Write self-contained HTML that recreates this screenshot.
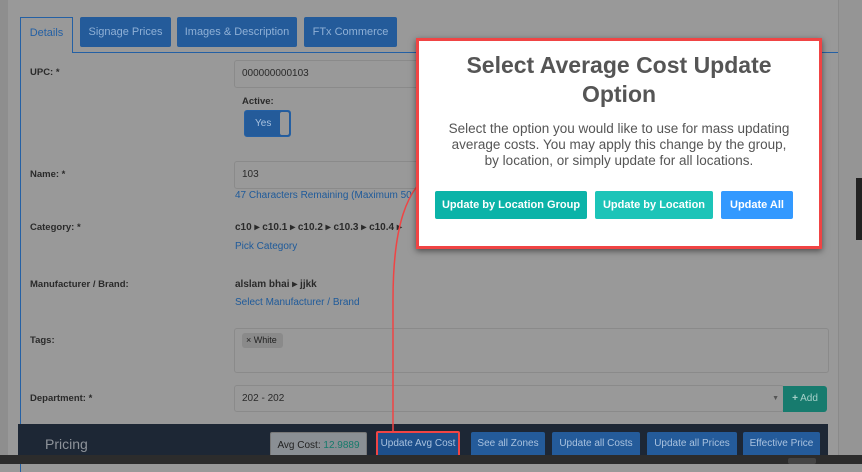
<!DOCTYPE html>
<html><head><style>
*{box-sizing:border-box;margin:0;padding:0}
body{width:862px;height:464px;overflow:hidden;background:#999;font-family:"Liberation Sans",Arial,sans-serif;position:relative;font-size:9.5px;color:#2a2a2a}
.abs{position:absolute}
.tab{position:absolute;top:17px;height:30px;background:#245b9a;color:#8fb0d6;font-size:11px;line-height:30px;text-align:center;border-radius:2px}
.lbl{position:absolute;left:30px;font-size:9.5px;font-weight:bold;color:#2a2a2a}
.inp{position:absolute;border:1px solid #8a8a8a;border-radius:3px;background:#999;font-size:10px;padding-left:7px;color:#2a2a2a}
.lnk{position:absolute;color:#1e5a9a;font-size:10px}
.btn{position:absolute;top:432px;height:28px;background:#245b9a;color:#a9c2df;font-size:10px;line-height:24px;text-align:center;border-radius:2px}
.mb{position:absolute;top:191px;height:28px;color:#fff;font-size:11px;font-weight:bold;line-height:28px;text-align:center;border-radius:2px}
</style></head><body>
<div class="abs" style="left:0;top:0;width:8px;height:464px;background:#8e8e8e"></div>
<div class="abs" style="left:838px;top:0;width:24px;height:464px;background:#959595;border-left:1px solid #8a8a8a"></div>
<div class="abs" style="left:856px;top:178px;width:6px;height:62px;background:#222"></div>
<div class="abs" style="left:20px;top:52px;width:818px;height:420px;border-left:1px solid #2460a4;border-top:1px solid #2460a4"></div>
<div class="abs" style="left:20px;top:17px;width:53px;height:36px;border:1px solid #2460a4;border-bottom:none;background:#999;color:#2460a4;font-size:11px;line-height:30px;text-align:center">Details</div>
<div class="tab" style="left:80px;width:91px">Signage Prices</div>
<div class="tab" style="left:177px;width:120px">Images &amp; Description</div>
<div class="tab" style="left:304px;width:93px">FTx Commerce</div>

<div class="lbl" style="top:67px">UPC: *</div>
<div class="inp" style="left:234px;top:60px;width:300px;height:28px;line-height:26px">000000000103</div>
<div class="lbl" style="left:242px;top:96px">Active:</div>
<div class="abs" style="left:244px;top:110px;width:47px;height:27px;background:#245b9a;border:1px solid #2460a4;border-radius:3px;color:#a9c2df;font-size:10px;line-height:25px;padding-left:10px">Yes<span class="abs" style="left:35px;top:1px;width:9px;height:23px;background:#999;border-radius:2px"></span></div>
<div class="lbl" style="top:169px">Name: *</div>
<div class="inp" style="left:234px;top:161px;width:300px;height:28px;line-height:26px">103</div>
<div class="lnk" style="left:235px;top:190px">47 Characters Remaining (Maximum 50</div>
<div class="lbl" style="top:222px">Category: *</div>
<div class="abs" style="left:235px;top:222px;font-weight:bold;font-size:10px">c10 ▸ c10.1 ▸ c10.2 ▸ c10.3 ▸ c10.4 ▸</div>
<div class="lnk" style="left:235px;top:241px">Pick Category</div>
<div class="lbl" style="top:279px">Manufacturer / Brand:</div>
<div class="abs" style="left:235px;top:279px;font-weight:bold;font-size:10px">alslam bhai ▸ jjkk</div>
<div class="lnk" style="left:235px;top:297px">Select Manufacturer / Brand</div>
<div class="lbl" style="top:335px">Tags:</div>
<div class="inp" style="left:234px;top:328px;width:595px;height:45px"></div>
<div class="abs" style="left:242px;top:333px;width:41px;height:15px;background:#8a8a8a;border-radius:3px;font-size:9px;line-height:15px;padding-left:4px;color:#222">× White</div>
<div class="lbl" style="top:393px">Department: *</div>
<div class="inp" style="left:234px;top:385px;width:550px;height:27px;line-height:25px">202 - 202<span class="abs" style="right:4px;top:0;font-size:7px;color:#555">▼</span></div>
<div class="abs" style="left:783px;top:386px;width:44px;height:26px;background:#177b6e;color:#a6d0c9;font-size:10px;line-height:26px;text-align:center;border-radius:0 3px 3px 0"><b>+</b> Add</div>
<div class="abs" style="left:18px;top:424px;width:810px;height:40px;background:#1d2735"></div>
<div class="abs" style="left:45px;top:436px;font-size:14px;color:#8e939a">Pricing</div>
<div class="abs" style="left:270px;top:432px;width:97px;height:28px;background:#8a8f94;border:1px solid #777;border-radius:2px;font-size:10px;line-height:26px;text-align:center;color:#222">Avg Cost: <span style="color:#157a6b">12.9889</span></div>
<div class="btn" style="left:376px;width:84px;background:#1d4f8b;border:2px solid #f04444;top:431px;height:26px;line-height:22px">Update Avg Cost</div>
<div class="btn" style="left:471px;width:74px">See all Zones</div>
<div class="btn" style="left:552px;width:88px">Update all Costs</div>
<div class="btn" style="left:647px;width:90px">Update all Prices</div>
<div class="btn" style="left:743px;width:77px">Effective Price</div>
<div class="abs" style="left:0;top:455px;width:862px;height:9px;background:#2c2c2c"></div>
<div class="abs" style="left:788px;top:458px;width:28px;height:6px;background:#444;border-radius:2px"></div>
<svg class="abs" style="left:0;top:0" width="862" height="464"><path d="M393 432 L393 300 C393 230 405 185 437 170" fill="none" stroke="#f04444" stroke-width="1.5"/><path d="M446 164 L435 166 L440 173 Z" fill="#f04444"/></svg>
<div class="abs" style="left:416px;top:38px;width:406px;height:211px;background:#fff;border:3px solid #f04444;box-shadow:0 2px 6px rgba(0,0,0,.5)"></div>
<div class="abs" style="left:419px;top:51px;width:400px;text-align:center;font-size:23px;font-weight:bold;color:#555;line-height:29px">Select Average Cost Update<br>Option</div>
<div class="abs" style="left:419px;top:121px;width:400px;text-align:center;font-size:13.5px;color:#555;line-height:16px">Select the option you would like to use for mass updating<br>average costs. You may apply this change by the group,<br>by location, or simply update for all locations.</div>
<div class="mb" style="left:435px;width:152px;background:#0bb3a8">Update by Location Group</div>
<div class="mb" style="left:595px;width:118px;background:#1cc4b8">Update by Location</div>
<div class="mb" style="left:721px;width:72px;background:#3399ff">Update All</div>
</body></html>
